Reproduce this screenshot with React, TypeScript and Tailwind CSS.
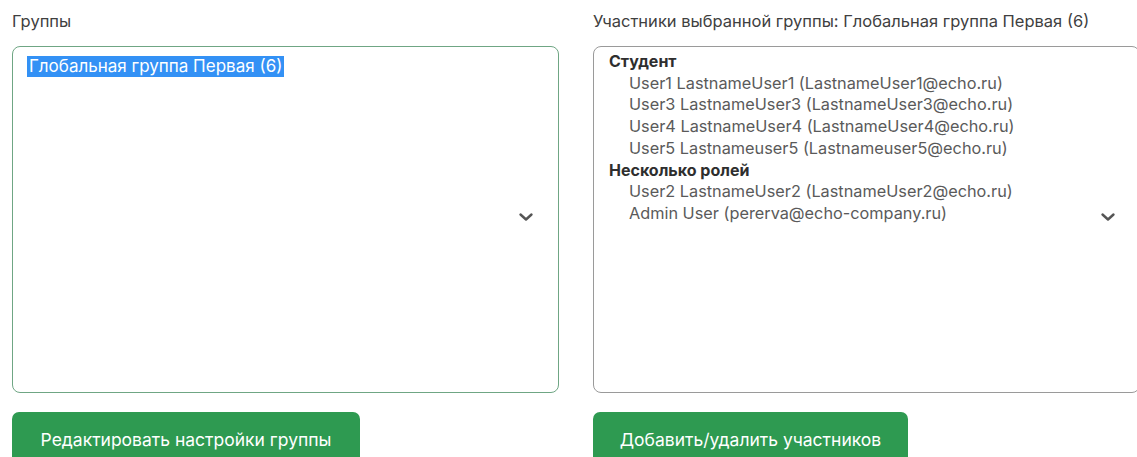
import React from "react";

const ChevronDown = () => (
  <svg width="16" height="10" viewBox="0 0 16 10" fill="none" className="shrink-0">
    <path d="M2.5 2.5 L8 7.5 L13.5 2.5" stroke="#555" strokeWidth="2.4" strokeLinecap="round" strokeLinejoin="round" />
  </svg>
);

export default function App() {
  // Members grouped by role
  const roles = [
    {
      name: "Студент",
      users: [
        "User1 LastnameUser1 (LastnameUser1@echo.ru)",
        "User3 LastnameUser3 (LastnameUser3@echo.ru)",
        "User4 LastnameUser4 (LastnameUser4@echo.ru)",
        "User5 Lastnameuser5 (Lastnameuser5@echo.ru)",
      ],
    },
    {
      name: "Несколько ролей",
      users: [
        "User2 LastnameUser2 (LastnameUser2@echo.ru)",
        "Admin User (pererva@echo-company.ru)",
      ],
    },
  ];

  return (
    <div className="w-[1137px] h-[457px] overflow-hidden bg-white font-['Inter',sans-serif] text-[16.5px] text-[#404040]">
      <div className="flex gap-[34px] pl-[12px] pt-[11px] w-[1200px]">
        {/* Groups */}
        <div className="flex flex-col w-[547px] shrink-0">
          <div className="h-[20px] leading-[20px] mb-[15px] whitespace-nowrap">Группы</div>
          <div className="relative h-[347px] rounded-[8px] border border-[#6fa684] pl-[14px] pt-[7px]">
            <span className="bg-[#3391f5] text-white text-[17px] leading-[21px] inline-block px-[2px]">
              Глобальная группа Первая (6)
            </span>
            <div className="absolute right-[24px] top-[165px]">
              <ChevronDown />
            </div>
          </div>
          <button className="mt-[19px] w-[348px] h-[56px] rounded-t-[7px] bg-[#2e9a51] text-white text-[17.5px] text-center">
            Редактировать настройки группы
          </button>
        </div>

        {/* Members of selected group */}
        <div className="flex flex-col w-[547px] shrink-0">
          <div className="h-[20px] leading-[20px] mb-[15px] whitespace-nowrap">
            Участники выбранной группы: Глобальная группа Первая (6)
          </div>
          <div className="relative h-[347px] rounded-[8px] border border-[#9a9a9a] pl-[15px] pt-[4px] leading-[21.7px]">
            {roles.map((role) => (
              <div key={role.name}>
                <div className="font-bold text-[16px] text-[#2e2e2e]">{role.name}</div>
                {role.users.map((u) => (
                  <div key={u} className="pl-[20px] text-[16.3px] text-[#5a5a5a] whitespace-nowrap">
                    {u}
                  </div>
                ))}
              </div>
            ))}
            <div className="absolute right-[23px] top-[165px]">
              <ChevronDown />
            </div>
          </div>
          <button className="mt-[19px] w-[315px] h-[56px] rounded-t-[7px] bg-[#2e9a51] text-white text-[17.5px] text-center">
            Добавить/удалить участников
          </button>
        </div>
      </div>
    </div>
  );
}
